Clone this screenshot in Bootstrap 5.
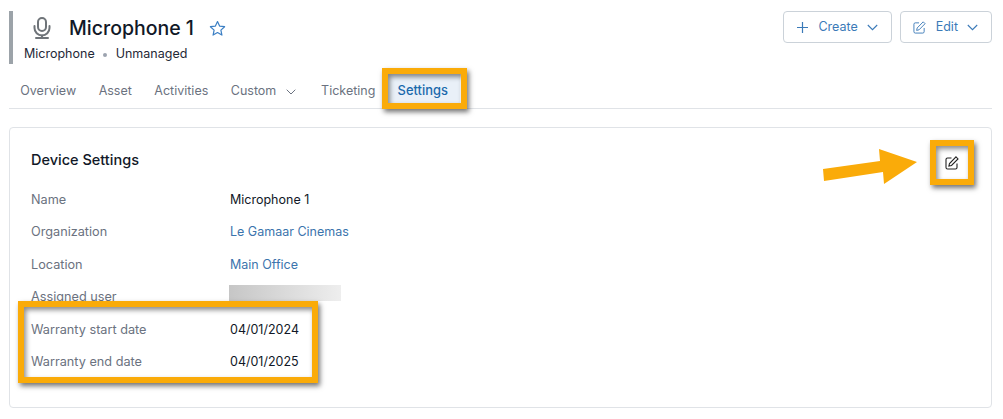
<!DOCTYPE html>
<html lang="en">
<head>
<meta charset="utf-8">
<title>Microphone 1</title>
<link href="https://cdn.jsdelivr.net/npm/bootstrap@5.3.0/dist/css/bootstrap.min.css" rel="stylesheet">
<style>
html,body{height:419px;overflow:hidden}
body{font-family:Inter,"Liberation Sans",sans-serif;font-size:12.5px;color:#111827;background:#fff;position:relative}
.page-head{padding:11px 11px 0 9px;height:70px}
.title-block{border-left:4px solid #9ca3a9;height:53px;padding-left:11px}
.title-line{height:29px;margin-top:3px}
.dev-title{font-size:19.5px;font-weight:500;line-height:29px;margin:0 0 0 9px;color:#111827}
.star-ic{margin-left:15px}
.sub-line{font-size:12.5px;line-height:18px;margin-top:2px;color:#1f2937}
.sep-dot{width:4px;height:4px;border-radius:50%;background:#9ca3af;margin:1px 8.5px 0}
.act-btn{height:32px;border:1px solid #cbd2d9;border-radius:4px;background:#fff;color:#3b7ab8;font-size:12.5px;padding:0 13px;display:flex;align-items:center}
.act-edit{padding-left:12px}
.ic-left{margin-right:10px}
.ic-right{margin-left:9px}
.tab-row{height:39px;margin:0 11px 0 9px;border-bottom:1px solid #e0e3e7}
.tab-it{color:#6b7280;font-size:12.5px;line-height:18px;padding:12px 11.25px 0;text-decoration:none;display:flex;gap:10px}
.tab-it:hover{color:#6b7280}
.tab-chev{margin-top:7px}
.tab-on,.tab-on:hover{color:#1a69ac;font-size:12.9px;font-weight:500;background:#e9f0f8;padding:9px 12px 0 10px;margin-top:3px;margin-left:1px;height:30px}
.tab-tick{padding-left:13.500px}
.pane{margin:18px 11px 0 9px;height:281px;border:1px solid #e0e3e7;border-radius:4px;padding:22px 21px 0}
.pane-title{font-size:14.5px;font-weight:500;line-height:20px;margin:0 0 20.5px;color:#111827}
.info-row{height:32.5px;line-height:18px;font-size:12.5px;margin:0}
.info-key{width:199px;color:#6b7280;font-size:12.7px}
.info-val{color:#111827}
.info-val a{color:#3b74ad;text-decoration:none}
.blurred{width:112px;height:16px;background:linear-gradient(90deg,#c6c6c6,#eeeeee);margin:-3px 0 0 -1px}
.mark-box{position:absolute;border:6px solid #faab09;box-shadow:2px 3px 5px rgba(0,0,0,.55),inset 2px 3px 5px rgba(0,0,0,.45)}
.mark-tab{left:382px;top:68px;width:85px;height:41px}
.mark-edit{left:930px;top:140px;width:44px;height:45px}
.mark-warr{left:18px;top:301px;width:300px;height:82px}
.arrow-ov{position:absolute;left:820px;top:145px}
.pencil-ov{position:absolute;left:945px;top:156px}
</style>
</head>
<body>
<div class="page-head d-flex justify-content-between">
  <div class="title-block">
    <div class="title-line d-flex align-items-center">
      <svg width="36" height="29" viewBox="0 0 36 29" fill="none" stroke="#6f7479" stroke-width="2" stroke-linecap="round" aria-hidden="true"><rect x="14" y="4" width="8" height="13" rx="4"/><path d="M10.500 12v2a7.500 7.500 0 0 0 15 0v-2"/><path d="M18 21.500v2.500M12 24h12"/></svg>
      <h1 class="dev-title">Microphone 1</h1>
      <svg class="star-ic" width="17" height="17" viewBox="0 0 17 17" fill="none" stroke="#3b7fc4" stroke-width="1.2" stroke-linejoin="round" aria-hidden="true"><path d="M8.500 1.500l2.100 4.600 5 .6-3.700 3.400 1 5-4.400-2.500-4.400 2.500 1-5-3.700-3.400 5-.6z"/></svg>
    </div>
    <div class="sub-line d-flex align-items-center">Microphone<span class="sep-dot"></span>Unmanaged</div>
  </div>
  <div class="d-flex gap-2 align-items-start">
    <button class="act-btn" type="button">
      <svg class="ic-left" width="11" height="11" viewBox="0 0 11 11" fill="none" stroke="#3b7ab8" stroke-width="1.2" aria-hidden="true"><path d="M5.500 0v11M0 5.500h11"/></svg>Create
      <svg class="ic-right" width="11" height="7" viewBox="0 0 11 7" fill="none" stroke="#3b7ab8" stroke-width="1.1" aria-hidden="true"><path d="M.8 1l4.700 4.700L10.200 1"/></svg>
    </button>
    <button class="act-btn act-edit" type="button">
      <svg class="ic-left" width="13" height="13" viewBox="0 0 14 14" fill="none" stroke="#3b7ab8" stroke-width="1" aria-hidden="true"><path d="M6.500 2H2.500A1.500 1.500 0 0 0 1 3.500v8A1.500 1.500 0 0 0 2.500 13h8a1.500 1.500 0 0 0 1.500-1.500V7.500"/><path d="M11 .9l2 2-6.500 6.600-2.600.6.600-2.600z"/></svg>Edit
      <svg class="ic-right" width="11" height="7" viewBox="0 0 11 7" fill="none" stroke="#3b7ab8" stroke-width="1.1" aria-hidden="true"><path d="M.8 1l4.700 4.700L10.200 1"/></svg>
    </button>
  </div>
</div>
<nav class="tab-row d-flex">
  <a class="tab-it" href="#">Overview</a>
  <a class="tab-it" href="#">Asset</a>
  <a class="tab-it" href="#">Activities</a>
  <a class="tab-it" href="#">Custom <svg class="tab-chev" width="10" height="6" viewBox="0 0 10 6" fill="none" stroke="#6b7280" stroke-width="1" aria-hidden="true"><path d="M.7.7L5 5l4.300-4.300"/></svg></a>
  <a class="tab-it tab-tick" href="#">Ticketing</a>
  <a class="tab-it tab-on" href="#">Settings</a>
</nav>
<section class="pane">
  <h2 class="pane-title">Device Settings</h2>
  <div class="info-row d-flex"><div class="info-key">Name</div><div class="info-val">Microphone 1</div></div>
  <div class="info-row d-flex"><div class="info-key">Organization</div><div class="info-val"><a href="#">Le Gamaar Cinemas</a></div></div>
  <div class="info-row d-flex"><div class="info-key">Location</div><div class="info-val"><a href="#">Main Office</a></div></div>
  <div class="info-row d-flex"><div class="info-key">Assigned user</div><div class="blurred"></div></div>
  <div class="info-row d-flex"><div class="info-key">Warranty start date</div><div class="info-val">04/01/2024</div></div>
  <div class="info-row d-flex"><div class="info-key">Warranty end date</div><div class="info-val">04/01/2025</div></div>
</section>
<div class="mark-box mark-tab"></div>
<div class="mark-box mark-edit"></div>
<div class="mark-box mark-warr"></div>
<svg class="pencil-ov" width="14" height="14" viewBox="0 0 14 14" fill="none" stroke="#222" stroke-width="1.1" aria-hidden="true"><path d="M6.500 2H2.500A1.500 1.500 0 0 0 1 3.500v8A1.500 1.500 0 0 0 2.500 13h8a1.500 1.500 0 0 0 1.500-1.500V7.500"/><path d="M11 .9l2 2-6.500 6.600-2.600.6.600-2.600z"/></svg>
<svg class="arrow-ov" width="100" height="42" viewBox="0 0 100 42" aria-hidden="true"><path fill="#faab09" d="M3 24L60 16 59 4 97 17 64 39 63 27 4 36z"/></svg>
</body>
</html>
